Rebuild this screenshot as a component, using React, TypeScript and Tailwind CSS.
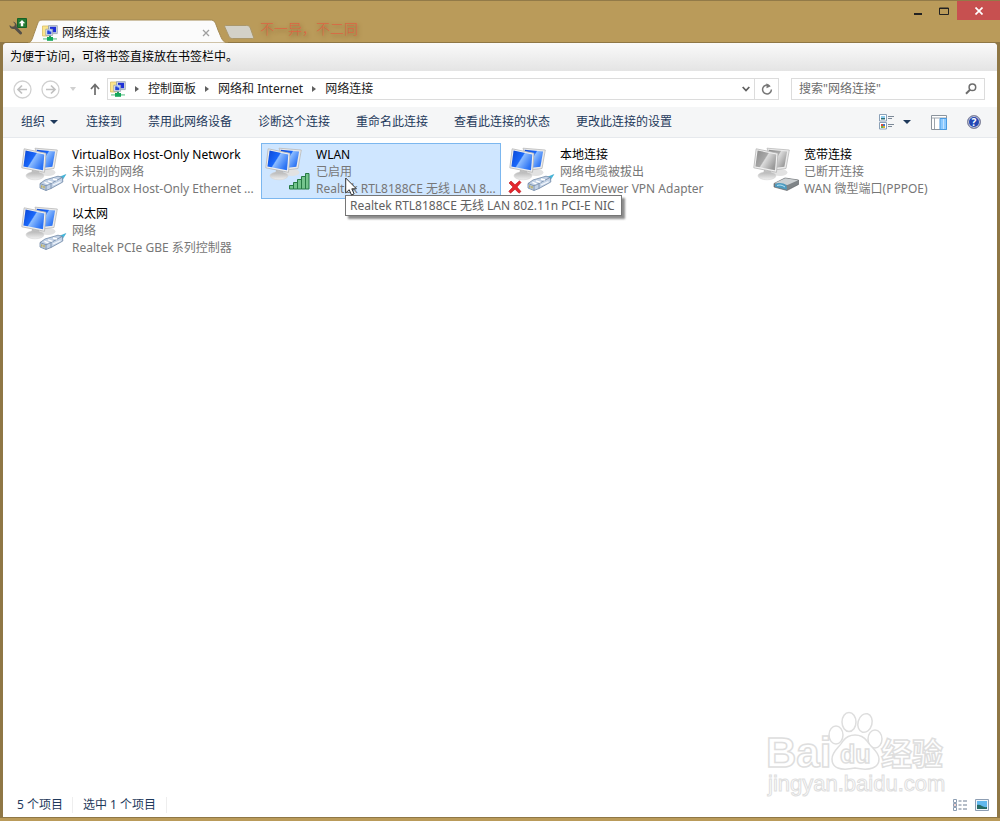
import React from "react";

interface Connection {
  id: number;
  name: string;
  status: string;
  device: string;
  badge: "cable" | "signal" | "modem" | "unplugged";
  tooltip?: string;
}

const connections: Connection[] = [
  { id: 1, name: "VirtualBox Host-Only Network", status: "未识别的网络", device: "VirtualBox Host-Only Ethernet ...", badge: "cable" },
  { id: 2, name: "WLAN", status: "已启用", device: "Realtek RTL8188CE 无线 LAN 8...", badge: "signal", tooltip: "Realtek RTL8188CE 无线 LAN 802.11n PCI-E NIC" },
  { id: 3, name: "本地连接", status: "网络电缆被拔出", device: "TeamViewer VPN Adapter", badge: "unplugged" },
  { id: 4, name: "宽带连接", status: "已断开连接", device: "WAN 微型端口(PPPOE)", badge: "modem" },
  { id: 5, name: "以太网", status: "网络", device: "Realtek PCIe GBE 系列控制器", badge: "cable" },
];

const commands = ["连接到", "禁用此网络设备", "诊断这个连接", "重命名此连接", "查看此连接的状态", "更改此连接的设置"];

const crumbs = ["控制面板", "网络和 Internet", "网络连接"];

const NetworkIcon = () => (
  <svg className="h-4 w-4 shrink-0" viewBox="0 0 16 16" aria-hidden="true">
    <path d="M0.5 1h6v10h-6z" fill="#fbe58c" stroke="#dcbf62" strokeWidth="0.8" />
    <path d="M6.5 0.6h8.8v8H6.5z" fill="#cfd8e4" stroke="#8d98a8" strokeWidth="0.7" />
    <path d="M8 1.8h6v5.4H8z" fill="#1d2fd8" />
    <path d="M3.8 4.2h6.8v6.2H3.8z" fill="#e6ebf2" stroke="#8d98a8" strokeWidth="0.7" />
    <path d="M5.2 5.4h4.2v3.8H5.2z" fill="#2446d8" />
    <path d="M7 2.5l3.2 4H7.6z" fill="#b9d2ff" />
    <path d="M7 10.8h2v2H7z" fill="#2c9660" />
    <path d="M1 13.2h14v1.4H1z" fill="#7fcfa0" />
    <path d="M5 12h6v3.8H5z" fill="#14a85a" />
  </svg>
);

const Monitors: React.FC<{ gray?: boolean; id: string }> = ({ gray, id }) => (
  <g>
    <defs>
      <linearGradient id={`${id}-screen`} x1="0" y1="0" x2="1" y2="0.6">
        <stop offset="0" stopColor={gray ? "#8a8a8a" : "#0a46d4"} />
        <stop offset="0.5" stopColor={gray ? "#a8a8a8" : "#1a68fa"} />
        <stop offset="0.55" stopColor={gray ? "#dcdcdc" : "#8cbcff"} />
        <stop offset="1" stopColor={gray ? "#9a9a9a" : "#2a72f4"} />
      </linearGradient>
      <linearGradient id={`${id}-base`} x1="0" y1="0" x2="0" y2="1">
        <stop offset="0" stopColor="#b4b4b4" />
        <stop offset="1" stopColor="#f0f0f0" />
      </linearGradient>
    </defs>
    <ellipse cx="27" cy="26.500" rx="7.500" ry="3.500" fill="#e2e2e2" />
    <path d="M14 2.200L36.300 4 33 22.500l-12 1.500z" fill="#ebebeb" stroke="#b9b9b9" strokeWidth="0.800" />
    <path d="M15.500 3.800l18.600 1.600-2.700 15.300-9 1z" fill={`url(#${id}-screen)`} />
    <path d="M11 24l7 1 1 5.500h-9z" fill="#b8b8b8" />
    <ellipse cx="14" cy="29.800" rx="9" ry="4" fill={`url(#${id}-base)`} stroke="#d0d0d0" strokeWidth="0.500" />
    <path d="M3.200 2.800L25 7.300 23.500 26.300.8 21.800z" fill="#f0f0f0" stroke="#b5b5b5" strokeWidth="0.800" />
    <path d="M4.600 4.500l18.700 4-1.300 15.800L2.400 20.400z" fill={`url(#${id}-screen)`} />
  </g>
);

const Cable = () => (
  <g>
    <path d="M34.500 32.800l10.300-4.300-4.500 7z" fill="#3fbbe0" stroke="#2a9cc4" strokeWidth="0.500" />
    <path d="M19 37.500l5-3.500 13-3.800 4.500 1.300.3 4.500L30 42.500l-5 2-6-2.500z" fill="#c3d2e6" stroke="#6f86a4" strokeWidth="0.800" />
    <path d="M19 37.500l6 2.300 5-2.300 11-6M25 39.800v4.700M30 37.500v5" fill="none" stroke="#6f86a4" strokeWidth="0.800" />
    <path d="M23.500 36.300l4 1.500M27 34.800l4.500 1.500M32 33l4 1" stroke="#fff" strokeWidth="1.300" />
    <path d="M20.800 39.300v2.500M23 40.100v2.500" stroke="#b8a548" strokeWidth="1.200" />
    <path d="M32 39l7.500-3.300" stroke="#f1f6fc" strokeWidth="1.300" />
  </g>
);

const ConnectionIcon: React.FC<{ connection: Connection }> = ({ connection }) => {
  const { badge, id } = connection;
  return (
    <svg className="h-12 w-12 shrink-0" viewBox="0 0 48 48" aria-hidden="true">
      <Monitors gray={badge === "modem"} id={`c${id}`} />
      {(badge === "cable" || badge === "unplugged") && <Cable />}
      {badge === "signal" && (
        <path
          d="M24.500 39.500h4V43h-4zM28.500 36.500h4V43h-4zM32.500 33.500h4V43h-4zM36.500 30.500h4V43h-4zM40.500 27.500h3.500V43h-3.500z"
          fill="#74c48d"
          stroke="#257a44"
        />
      )}
      {badge === "modem" && (
        <g>
          <path d="M21 37.500l11-5.500 13.500 2v4.500L34 44.500l-13-3.500z" fill="#7f8487" stroke="#55595c" strokeWidth="0.600" />
          <path d="M21.500 37.200l10.700-5 13 2L34.500 39z" fill="#ccd0d2" />
          <path d="M22 38.500c3-2 8-2 11.500 1l.5 4.300-12-3z" fill="#4d9bc0" />
          <path d="M24 39.500c3-1 5-.500 8 1.500" fill="none" stroke="#b6e4f5" />
        </g>
      )}
    </svg>
  );
};

const Caret = () => (
  <svg className="h-1 w-2" viewBox="0 0 8 4" aria-hidden="true">
    <path d="M0 0h8L4 4z" fill="#1e395b" />
  </svg>
);

const TitleBar = () => (
  <header className="flex h-[42px] items-start border-t border-[#927a48] pl-2">
    <button aria-label="工具" className="mt-4 h-5 w-5">
      <svg viewBox="0 0 20 20" aria-hidden="true">
        <path d="M4.800 4.500L7 7 6.300 9.300 3.800 9.800 1.500 8c0 3 2 4.500 5 4l5.300 5.200c1.500 1 2.800-.5 2-1.900L8.800 10c.4-2.700-1-5-4-5.500z" fill="#555048" />
        <path d="M9.500 1.500h9v9h-9z" fill="#237a32" stroke="#176126" />
        <path d="M14 3l3.200 3.300h-2v3h-2.400v-3h-2z" fill="#fff" />
      </svg>
    </button>
    <div className="relative mt-[18px] flex h-6 w-[200px] items-center pl-3.5 pr-[18px] pt-1">
      <svg className="absolute inset-0 h-full w-full" viewBox="0 0 200 24" preserveAspectRatio="none" aria-hidden="true">
        <path d="M0 24C4 23 4 20 7 12 10 4 10 1 14 1H182C187 1 187 3 190 11 194 20 194 23 200 24z" fill="#fbfbfb" stroke="#a38952" />
      </svg>
      <div className="relative flex w-full items-center">
        <NetworkIcon />
        <span className="ml-1 text-xs text-[#222]">网络连接</span>
        <button aria-label="关闭标签页" className="ml-auto h-2 w-2">
          <svg viewBox="0 0 8 8" aria-hidden="true">
            <path d="M1 1l6 6M7 1L1 7" stroke="#a0a0a0" strokeWidth="1.300" />
          </svg>
        </button>
      </div>
    </div>
    <button aria-label="新标签页" className="-ml-1 mt-6 h-[14px] w-[30px]">
      <svg viewBox="0 0 30 14" aria-hidden="true">
        <path d="M2 .5h20.500c2 0 3 .7 3.800 2.500L29.500 12c.4 1-.1 1.500-1.200 1.500H8.500c-2 0-3-.8-3.700-2.500L.8 2C.5 1 1 .5 2 .5z" fill="#d3d1c8" stroke="#aa976b" />
      </svg>
    </button>
    <span className="ml-1.5 mt-[18px] text-sm font-light text-[#dc6543] [text-shadow:1px_2px_4px_#806030]">不一异，不二同</span>
    <div className="ml-auto flex">
      <button aria-label="最小化" className="flex h-[19px] w-[26px] items-center justify-center">
        <svg className="h-3 w-2" viewBox="0 0 8 12"><path d="M0 8h8v2H0z" fill="#222" /></svg>
      </button>
      <button aria-label="最大化" className="flex h-[19px] w-[26px] items-center justify-center">
        <svg className="h-2 w-2.5" viewBox="0 0 10 8"><path d="M.5 1h9v6.500h-9zM.5 1.500h9" fill="none" stroke="#222" /></svg>
      </button>
      <button aria-label="关闭" className="flex h-[19px] w-[43px] items-center justify-center bg-[#c75050]">
        <svg className="h-2 w-2" viewBox="0 0 8 8"><path d="M.5.5l7 7M7.500.5l-7 7" stroke="#fff" strokeWidth="1.700" /></svg>
      </button>
    </div>
  </header>
);

const AddressBar = () => (
  <div className="flex h-9 items-center bg-white pl-2.5 pr-3">
    <button aria-label="后退" className="h-[19px] w-[19px]">
      <svg viewBox="0 0 19 19" fill="none" aria-hidden="true">
        <circle cx="9.500" cy="9.500" r="8.500" stroke="#d0d0d0" strokeWidth="1.300" />
        <path d="M14 9.500H5.500M9 5.500l-4 4 4 4" stroke="#c0c0c0" strokeWidth="1.700" />
      </svg>
    </button>
    <button aria-label="前进" className="ml-[9px] h-[19px] w-[19px]">
      <svg viewBox="0 0 19 19" fill="none" aria-hidden="true">
        <circle cx="9.500" cy="9.500" r="8.500" stroke="#d0d0d0" strokeWidth="1.300" />
        <path d="M5 9.500h8.500M10 5.500l4 4-4 4" stroke="#c0c0c0" strokeWidth="1.700" />
      </svg>
    </button>
    <button aria-label="最近浏览的位置" className="ml-[9px] flex h-4 w-2 items-center">
      <svg viewBox="0 0 8 4" aria-hidden="true"><path d="M1 0h6L4 4z" fill="#d0d0d0" /></svg>
    </button>
    <button aria-label="上移" className="ml-3 h-3 w-3">
      <svg viewBox="0 0 12 12" fill="none" aria-hidden="true">
        <path d="M6 12V1.500M2 6l4-4.500L10 6" stroke="#6c6c6c" strokeWidth="1.700" />
      </svg>
    </button>
    <nav aria-label="地址" className="ml-1.5 flex h-[22px] min-w-0 flex-1 items-center border border-[#dcdcdc] pl-0.5">
      <NetworkIcon />
      {crumbs.map((crumb) => (
        <React.Fragment key={crumb}>
          <svg className="mx-[9px] h-1.5 w-1 shrink-0" viewBox="0 0 4 6" aria-hidden="true"><path d="M0 0l4 3-4 3z" fill="#606060" /></svg>
          <a href="#" className="whitespace-nowrap text-xs text-[#222]">{crumb}</a>
        </React.Fragment>
      ))}
      <button aria-label="以前的位置" className="ml-auto flex h-full w-4 items-center justify-center">
        <svg className="h-1.5 w-2" viewBox="0 0 8 6" fill="none"><path d="M.7 1L4 4.500 7.300 1" stroke="#606060" strokeWidth="1.800" /></svg>
      </button>
      <button aria-label="刷新" className="flex h-full w-6 items-center justify-center border-l border-[#dcdcdc]">
        <svg className="h-3 w-3" viewBox="0 0 12 12" fill="none">
          <path d="M8.500 2.900A4.400 4.400 0 1 0 10.400 6.500" stroke="#777" strokeWidth="1.500" />
          <path d="M5.500 .3v5l4.300-2z" fill="#777" />
        </svg>
      </button>
    </nav>
    <div className="ml-3 flex h-[22px] w-[194px] items-center border border-[#dcdcdc] px-[7px]">
      <input aria-label="搜索" type="text" placeholder={'搜索"网络连接"'} className="min-w-0 flex-1 text-xs outline-none placeholder:text-[#6d6d6d]" />
      <svg className="h-3 w-3" viewBox="0 0 12 12" fill="none" aria-hidden="true">
        <circle cx="7.400" cy="4.300" r="3.300" stroke="#6d6d6d" strokeWidth="1.500" />
        <path d="M5 6.800L1 10.800" stroke="#6d6d6d" strokeWidth="2" />
      </svg>
    </div>
  </div>
);

const CommandBar = () => (
  <div className="flex h-[31px] items-center border-b border-[#e6e9ed] bg-[#f5f6f7] pl-[18px] pr-4 text-xs text-[#1e395b]">
    <button className="flex items-center gap-[5px]">组织 <Caret /></button>
    <div className="ml-7 flex gap-[26px]">
      {commands.map((command) => (
        <button key={command} className="whitespace-nowrap">{command}</button>
      ))}
    </div>
    <div className="ml-auto flex items-center">
      <button aria-label="更改视图" className="h-4 w-4">
        <svg viewBox="0 0 16 16" aria-hidden="true">
          <path d="M.5.5h7v6.500h-7zM.5 8.500h7V15h-7z" fill="#fff" stroke="#8ba0b7" />
          <path d="M2 2h4v3H2z" fill="#8fcdf0" /><path d="M2 4h4v1.500H2z" fill="#306f75" />
          <path d="M2 10h2v2H2z" fill="#d8503a" /><path d="M4 10h2v2H4z" fill="#4278ca" />
          <path d="M2 12h2v2H2z" fill="#69ae4f" /><path d="M4 12h2v2H4z" fill="#dcad35" />
          <path d="M9 2.500h6M9 4.500h4M9 10.500h6M9 12.500h4" stroke="#7c8998" />
        </svg>
      </button>
      <button aria-label="视图选项" className="ml-2 flex h-4 w-2 items-center"><Caret /></button>
      <button aria-label="预览窗格" className="ml-5 h-[15px] w-4">
        <svg viewBox="0 0 16 15" aria-hidden="true">
          <path d="M.5.5h15v14H.5z" fill="#fff" stroke="#8b949d" />
          <path d="M1 3h14M3.500 3v11" stroke="#9da5ad" />
          <path d="M9 3.500h6.500v11H9z" fill="#8dcaff" stroke="#4b9be0" />
          <path d="M12.500 4v10" stroke="#c4e4ff" />
        </svg>
      </button>
      <button aria-label="帮助" className="ml-5 flex h-[14px] w-[14px] items-center justify-center rounded-full border border-[#8a8a9c] bg-[#2448b5] text-[10px] font-bold leading-none text-white ring-1 ring-[#c8c8d2] ring-inset">?</button>
    </div>
  </div>
);

const ConnectionItem: React.FC<{ connection: Connection }> = ({ connection }) => (
  <li
    className={
      connection.tooltip
        ? "relative flex h-14 w-60 border border-[#7cb7ef] bg-[#cfe6ff] pl-[3px] pt-0.5"
        : "relative flex h-14 w-60 border border-transparent pl-[3px] pt-0.5"
    }
  >
    <ConnectionIcon connection={connection} />
    {connection.badge === "unplugged" && (
      <svg className="absolute bottom-1 left-0.5 h-[14px] w-[14px]" viewBox="0 0 14 14" aria-hidden="true">
        <path d="M1 3L3 1l4 3.800L11.500.8 13 2.500 9 7l4 4.500-2 1.700-4-4-4.500 4L.8 11.300 5 7z" fill="#e5262d" stroke="#b5131a" strokeWidth="0.600" />
      </svg>
    )}
    <div className="ml-[3px] text-xs leading-[17px] text-[#777]">
      <p className="whitespace-nowrap text-black">{connection.name}</p>
      <p className="whitespace-nowrap">{connection.status}</p>
      <p className="whitespace-nowrap">{connection.device}</p>
    </div>
    {connection.tooltip && (
      <>
        <div role="tooltip" className="absolute left-[83px] top-[51px] z-10 whitespace-nowrap border border-[#767676] bg-white pl-1 pr-1.5 text-xs leading-[19px] text-[#606060] shadow-[3px_3px_2px_rgba(0,0,0,0.45)]">
          {connection.tooltip}
        </div>
        <svg className="absolute left-[83px] top-[33px] z-20 h-[19px] w-3" viewBox="0 0 12 19" aria-hidden="true">
          <path d="M.7 1v15l3.500-3.300L6.500 18l2.600-1.100-2.300-5.100h4.600z" fill="#fff" stroke="#333" />
        </svg>
      </>
    )}
  </li>
);

const Watermark = () => (
  <svg className="absolute bottom-4 right-[46px] h-[92px] w-[188px]" viewBox="0 0 188 92" fill="#fff" stroke="#dedede" strokeWidth="1.500" aria-hidden="true">
    <ellipse cx="73" cy="26" rx="7" ry="9" />
    <ellipse cx="86" cy="13" rx="7" ry="9.500" />
    <ellipse cx="102" cy="14" rx="7" ry="9.500" transform="rotate(15 102 14)" />
    <ellipse cx="112" cy="30" rx="7" ry="9" />
    <path d="M80 32c6-8 18-8 24 0 4 7 12 10 12 18 0 9-9 12-24 9-15 3-23 0-23-9 0-8 7-11 11-18z" />
    <g fontFamily="'Liberation Sans', 'Noto Sans CJK SC', sans-serif">
      <text x="3" y="58" fontSize="42" fontWeight="bold">Bai</text>
      <text x="77" y="54" fontSize="25" fontWeight="bold">du</text>
      <text x="118" y="56" fontSize="31" fontWeight="bold">经验</text>
      <text x="5" y="82" fontSize="22" strokeWidth="1">jingyan.baidu.com</text>
    </g>
  </svg>
);

const StatusBar = () => (
  <footer className="flex h-[25px] items-center pl-3.5 pr-2 text-xs text-[#1e395b]">
    <span className="border-r border-[#eee] pr-[9px]">5 个项目</span>
    <span className="border-r border-[#eee] px-2.5">选中 1 个项目</span>
    <button aria-label="详细信息" className="ml-auto h-3 w-[14px]">
      <svg viewBox="0 0 14 12" aria-hidden="true">
        <path d="M.5.500h3v3h-3zM.5 4.500h3v3h-3zM.5 8.500h3v3h-3z" fill="#fff" stroke="#8d9eb3" />
        <path d="M5.500 2h3M10 2h4M5.500 6h3M10 6h4M5.500 10h3M10 10h4" stroke="#6d7d91" />
        <path d="M1.500 5.500h1v1h-1z" fill="#d05040" />
      </svg>
    </button>
    <button aria-label="大图标" className="ml-2 h-3 w-[14px]">
      <svg viewBox="0 0 14 12" aria-hidden="true">
        <path d="M.5.5h13v11H.5z" fill="#eef4fa" stroke="#8d9eb3" />
        <path d="M2 2h10v8H2z" fill="#61b8ee" /><path d="M2 6c4-1 6 3 10 2v2H2z" fill="#256b65" />
      </svg>
    </button>
  </footer>
);

const App: React.FC = () => {
  return (
    <div className="flex min-h-screen flex-col bg-[#ba9b5a] pb-[3px] font-['Noto_Sans','Noto_Sans_CJK_SC',sans-serif]">
      <TitleBar />
      <div className="flex flex-1 flex-col border-x-3 border-y border-[#8f7745] bg-[#8f7745]">
        <main className="relative flex flex-1 flex-col rounded-t-sm bg-white">
          <div className="flex h-7 items-center rounded-t-sm bg-linear-to-b from-[#fafafa] to-[#e4e4e4] pl-[7px] text-xs text-black">
            为便于访问，可将书签直接放在书签栏中。
          </div>
          <AddressBar />
          <CommandBar />
          <ul className="grid grid-cols-[repeat(auto-fill,240px)] gap-x-1 gap-y-[3px] pl-3.5 pt-[5px]">
            {connections.map((connection) => (
              <ConnectionItem key={connection.id} connection={connection} />
            ))}
          </ul>
          <div className="flex-1" />
          <StatusBar />
          <Watermark />
        </main>
      </div>
    </div>
  );
};

export default App;
